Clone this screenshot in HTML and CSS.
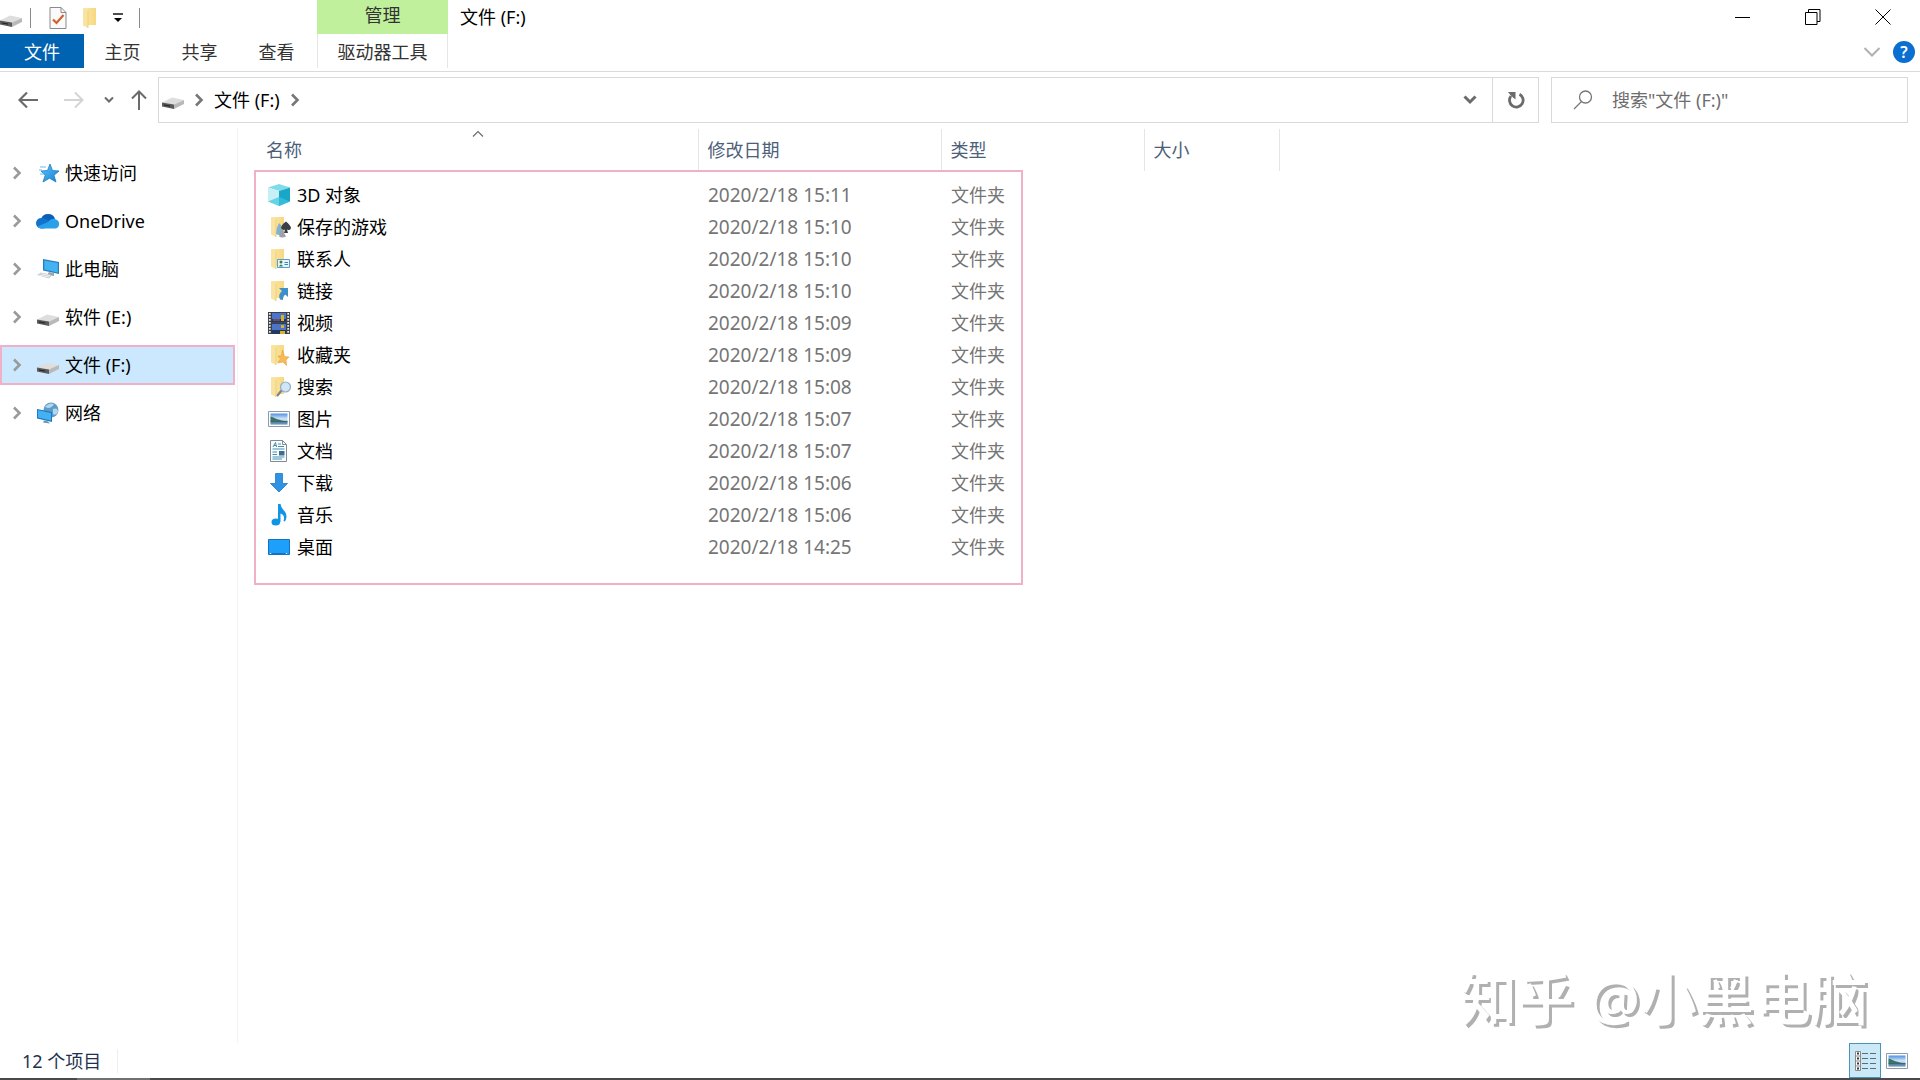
FILE: index.html
```html
<!DOCTYPE html>
<html lang="zh-CN">
<head>
  <meta charset="UTF-8">
  <title>文件 (F:)</title>
  <link rel="stylesheet" href="styles.css">
</head>
<body>
  <svg class="defs" aria-hidden="true">
    <defs>
      <linearGradient id="gFolder" x1="0" x2="1" y1="0" y2="0">
        <stop offset="0" stop-color="#fbe7a6"/>
        <stop offset="1" stop-color="#f6d880"/>
      </linearGradient>
      <linearGradient id="gSky" x1="0" x2="0" y1="0" y2="1">
        <stop offset="0" stop-color="#4f8fe0"/>
        <stop offset="0.5" stop-color="#d3e8f8"/>
        <stop offset="1" stop-color="#4a7fae"/>
      </linearGradient>
      <linearGradient id="gBlue" x1="0" x2="1" y1="0" y2="1">
        <stop offset="0" stop-color="#5fc4f8"/>
        <stop offset="1" stop-color="#1580d4"/>
      </linearGradient>
      <symbol id="drive" viewBox="0 0 22 22">
        <path d="M0 13.500L10 8.500L22 11L12 15.500Z" fill="#dedede"/>
        <path d="M0 13.500L12 15.500V20L0 17.500Z" fill="#5a5a5a"/>
        <path d="M12 15.500L22 11V15L12 20Z" fill="#b9b9b9"/>
        <path d="M2 15.500L8 16.600V17.600L2 16.500Z" fill="#222"/>
      </symbol>
      <symbol id="folder" viewBox="0 0 22 22">
        <path d="M4 1H16V18H4Z" fill="url(#gFolder)"/>
        <path d="M3 1L8 3.500V21L3 18.500Z" fill="#f9e3a0"/>
        <path d="M8 3.500V21" stroke="#edd07a" fill="none"/>
      </symbol>
      <symbol id="picture" viewBox="0 0 22 22">
        <path d="M.5 3.500H21.500V18.500H.5Z" fill="#fff" stroke="#8d9aa8"/>
        <path d="M2.500 5.500H19.500V16.500H2.500Z" fill="url(#gSky)"/>
        <path d="M2.500 8.500C7 10 11 12.500 19.500 13.500H2.500Z" fill="#3a7562"/>
        <path d="M2.500 13H19.500V14.500H2.500Z" fill="#3b6573"/>
      </symbol>
      <symbol id="chevron" viewBox="0 0 10 14">
        <path d="M2 1.500L7.500 7L2 12.500" fill="none" stroke="currentColor" stroke-width="2.600"/>
      </symbol>
    </defs>
  </svg>

  <div class="window">
    <header class="titlebar">
      <div class="quick">
        <svg class="icon"><use href="#drive"/></svg>
        <span class="sep"></span>
        <button class="quick-btn" aria-label="属性">
          <svg class="icon" viewBox="0 0 22 22"><path d="M3 .5H14L19 5.500V21.500H3Z" fill="#fafafa" stroke="#8a8a8a"/><path d="M14 .5V5.500H19" fill="none" stroke="#8a8a8a"/><path d="M6 12.500L9.500 16L16.500 8" fill="none" stroke="#d2602b" stroke-width="2.200"/></svg>
        </button>
        <button class="quick-btn" aria-label="新建文件夹"><svg class="icon"><use href="#folder"/></svg></button>
        <button class="quick-btn small" aria-label="自定义快速访问工具栏">
          <svg width="10" height="10" viewBox="0 0 10 10"><path d="M0 1H10" stroke="#000" stroke-width="1.400"/><path d="M1 5H9L5 9Z"/></svg>
        </button>
        <span class="sep"></span>
      </div>
      <div class="context-tab">管理</div>
      <h1 class="title">文件 (F:)</h1>
      <div class="window-btns">
        <button aria-label="最小化"><svg width="16" height="16" viewBox="0 0 16 16"><path d="M0 8.500H15"/></svg></button>
        <button aria-label="还原"><svg width="16" height="16" viewBox="0 0 16 16"><path d="M.5 3.500H12V15.500H.5ZM3.500 3.500V.5H15V12.500H12"/></svg></button>
        <button aria-label="关闭"><svg width="16" height="16" viewBox="0 0 16 16"><path d="M.5 .5L15.500 15.500M15.500 .5L.5 15.500"/></svg></button>
      </div>
    </header>

    <nav class="ribbon">
      <button class="tab file">文件</button>
      <button class="tab">主页</button>
      <button class="tab">共享</button>
      <button class="tab">查看</button>
      <button class="tab tools">驱动器工具</button>
      <div class="ribbon-right">
        <button aria-label="展开功能区"><svg width="18" height="12" viewBox="0 0 18 12"><path d="M1.500 2L9 9.500L16.500 2" fill="none" stroke="#b0b0b0" stroke-width="2"/></svg></button>
        <button class="help" aria-label="帮助">?</button>
      </div>
    </nav>

    <div class="address-row">
      <div class="arrows">
        <button aria-label="后退"><svg width="20" height="18" viewBox="0 0 20 18"><path d="M9 1.500L1.500 9L9 16.500M1.500 9H20" fill="none" stroke="#6b6b6b" stroke-width="2.200"/></svg></button>
        <button aria-label="前进"><svg width="20" height="18" viewBox="0 0 20 18"><path d="M11 1.500L18.500 9L11 16.500M18.500 9H0" fill="none" stroke="#d4d4d4" stroke-width="2"/></svg></button>
        <button aria-label="最近浏览的位置"><svg width="10" height="8" viewBox="0 0 10 8"><path d="M1 1.500L5 5.500L9 1.500" fill="none" stroke="#6b6b6b" stroke-width="2"/></svg></button>
        <button aria-label="上移"><svg width="16" height="20" viewBox="0 0 16 20"><path d="M1 8.500L8 1.500L15 8.500M8 1.500V20" fill="none" stroke="#6b6b6b" stroke-width="2"/></svg></button>
      </div>
      <div class="address">
        <svg class="icon"><use href="#drive"/></svg>
        <svg class="chev dark"><use href="#chevron"/></svg>
        <a href="#" class="crumb">文件 (F:)</a>
        <svg class="chev dark"><use href="#chevron"/></svg>
        <button class="drop" aria-label="历史记录"><svg width="14" height="10" viewBox="0 0 14 10"><path d="M1.500 1.500L7 7L12.500 1.500" fill="none" stroke="#6b6b6b" stroke-width="3"/></svg></button>
        <button class="refresh" aria-label="刷新"><svg width="18" height="18" viewBox="0 0 18 18"><path d="M12.500 3.200A6.800 6.800 0 1 1 4 5" fill="none" stroke="#6b6b6b" stroke-width="2.800"/><path d="M1 1H8.500V8.500L6 6.500L3 3.500Z" fill="#6b6b6b"/></svg></button>
      </div>
      <label class="search">
        <svg width="20" height="20" viewBox="0 0 20 20"><circle cx="12.500" cy="7" r="6" fill="none" stroke="#777" stroke-width="1.300"/><path d="M8.500 11.500L1 19" stroke="#777" stroke-width="1.300"/></svg>
        <input type="text" aria-label="搜索" placeholder='搜索"文件 (F:)"'>
      </label>
    </div>

    <main class="content">
      <nav class="sidebar">
        <a href="#" class="nav-item">
          <svg class="chev"><use href="#chevron"/></svg>
          <svg class="icon" viewBox="0 0 22 22"><path d="M13 2L15.500 8.500L22 9L17 13.300L19 20L12.500 16.200L6 20L8.200 13.300L4 9L10.500 8.500Z" fill="url(#gBlue)" stroke="#1d7cc4" stroke-width=".8"/><path d="M3 5H9M2 8H5M3 12H7" stroke="#6bbdf0" stroke-width="1.200"/></svg>
          快速访问
        </a>
        <a href="#" class="nav-item">
          <svg class="chev"><use href="#chevron"/></svg>
          <svg class="icon wide" viewBox="0 0 24 22"><path d="M5 9A7.600 7.600 0 0 1 19 8.500L13 14L2 15Z" fill="#0a5fb8"/><path d="M5 18.500A5 5 0 0 1 5.500 8C9 7.500 11 9.500 15 12L8 18.500Z" fill="#1272cc"/><path d="M12 12C14.500 8.500 18 8 20 9.500A4.800 4.800 0 0 1 20 18.500H5Q3 18.500 1.500 16.500Z" fill="#28a0ea"/></svg>
          OneDrive
        </a>
        <a href="#" class="nav-item">
          <svg class="chev"><use href="#chevron"/></svg>
          <svg class="icon" viewBox="0 0 22 22"><path d="M6 1L22 4V16L6 12.500Z" fill="#2b7dbb"/><path d="M7.300 2.500L20.800 5V14.500L7.300 11.500Z" fill="#43b3f3"/><path d="M12 14L17 15L17 18L10 17Z" fill="#9aa5ad"/><path d="M0 17L4 14.500L15 17L12 20.500Z" fill="#c5cbd0"/><path d="M2 17L12 19M4 15.700L13 17.800" stroke="#fff" stroke-width=".7"/></svg>
          此电脑
        </a>
        <a href="#" class="nav-item">
          <svg class="chev"><use href="#chevron"/></svg>
          <svg class="icon"><use href="#drive"/></svg>
          软件 (E:)
        </a>
        <a href="#" class="nav-item selected">
          <svg class="chev"><use href="#chevron"/></svg>
          <svg class="icon"><use href="#drive"/></svg>
          文件 (F:)
        </a>
        <a href="#" class="nav-item">
          <svg class="chev"><use href="#chevron"/></svg>
          <svg class="icon" viewBox="0 0 22 22"><circle cx="14" cy="8" r="7.500" fill="#5b9cc9"/><path d="M8 5Q12 0 17 2Q15 6 11 6ZM16 7Q21 5 21 10Q19 14 16 12Z" fill="#b4d6ea"/><path d="M0 7L15 10V20L0 16.500Z" fill="#1f78bd"/><path d="M1 8.200L14 11V18.500L1 15.500Z" fill="#44b2f2"/><path d="M7 18.500L11 19.500L13 21.500L6 20.500Z" fill="#6a91ab"/></svg>
          网络
        </a>
      </nav>

      <section class="files">
        <table>
          <thead>
            <tr>
              <th class="name">名称<svg class="sort" width="12" height="8" viewBox="0 0 12 8"><path d="M1 6.500L6 1.500L11 6.500" fill="none" stroke="#6b6b6b" stroke-width="1.200"/></svg></th>
              <th class="date">修改日期</th>
              <th class="type">类型</th>
              <th class="size">大小</th>
            </tr>
          </thead>
          <tbody>
            <tr>
              <td><a href="#"><svg class="icon" viewBox="0 0 22 22"><path d="M0 3.500L11 0L22 3.500L11 7Z" fill="#7fdbea"/><path d="M0 3.500L11 7V22L0 17.500Z" fill="#c6f0f6"/><path d="M11 7L22 3.500V17.500L11 22Z" fill="#1aa7c6"/><path d="M0 17.500L11 13L22 17.500L11 22Z" fill="#3cc4de" opacity=".7"/></svg>3D 对象</a></td>
              <td>2020/2/18 15:11</td><td>文件夹</td><td></td>
            </tr>
            <tr>
              <td><a href="#"><svg class="icon" viewBox="0 0 22 22"><use href="#folder"/><path d="M11 7Q8 12 8 18L13 20V9Z" fill="#7fb2d4"/><path d="M18 5.500Q13 9 13 12Q14 15 17 13.500L16 17H20L19 13.500Q22.500 15 23 12Q22.500 9 18 5.500Z" fill="#3b3f45"/><path d="M13 13Q16 13 15.500 16L18 20.500Q14 22.500 11 20.500L12.500 17Z" fill="#9ea1a5"/></svg>保存的游戏</a></td>
              <td>2020/2/18 15:10</td><td>文件夹</td><td></td>
            </tr>
            <tr>
              <td><a href="#"><svg class="icon" viewBox="0 0 22 22"><use href="#folder"/><path d="M9.500 11.500H21.500V19.500H9.500Z" fill="#e6f4fc" stroke="#5a9bc8"/><circle cx="13" cy="14" r="1.500" fill="#3c7d5a"/><path d="M11 18.500Q13 14.500 15 18.500Z" fill="#3c7d5a"/><path d="M16.500 14.500H20M16.500 16.500H20" stroke="#3d86bd"/></svg>联系人</a></td>
              <td>2020/2/18 15:10</td><td>文件夹</td><td></td>
            </tr>
            <tr>
              <td><a href="#"><svg class="icon" viewBox="0 0 22 22"><use href="#folder"/><path d="M11 8H20V17L17.500 14.800Q14.500 16 15 20L12 19.500Q9.500 15 14 11Z" fill="#3f8fcb"/></svg>链接</a></td>
              <td>2020/2/18 15:10</td><td>文件夹</td><td></td>
            </tr>
            <tr>
              <td><a href="#"><svg class="icon" viewBox="0 0 22 22"><path d="M0 0H22V22H0Z" fill="#3a3f48"/><path d="M4 1H18V10.500H4ZM4 12H18V22H4Z" fill="#4d74c9"/><path d="M4 7H18V10.500H4ZM4 18H18V22H4Z" fill="#27385e"/><path d="M13 3H16V9H13ZM13 13H16V16H13ZM12 19H17V22H12Z" fill="#d9b320"/><path d="M5 8H12" stroke="#b4606f"/><path d="M1.800 1V22M20.200 1V22" stroke="#e8e8e8" stroke-width="1.800" stroke-dasharray="1.800 1.200"/></svg>视频</a></td>
              <td>2020/2/18 15:09</td><td>文件夹</td><td></td>
            </tr>
            <tr>
              <td><a href="#"><svg class="icon" viewBox="0 0 22 22"><use href="#folder"/><path d="M14.500 6L16.500 12.500L21 13L18 16L18.500 21.500L15 18L9.500 19L12.500 15L10 12L13.500 12Z" fill="#f7bb55" stroke="#e3a03a" stroke-width=".6"/></svg>收藏夹</a></td>
              <td>2020/2/18 15:09</td><td>文件夹</td><td></td>
            </tr>
            <tr>
              <td><a href="#"><svg class="icon" viewBox="0 0 22 22"><use href="#folder"/><path d="M14 14L9 20" stroke="#7d8388" stroke-width="2.200"/><circle cx="17.500" cy="11" r="5" fill="#cfe6f6" stroke="#8fb0c8" stroke-width="1.200"/></svg>搜索</a></td>
              <td>2020/2/18 15:08</td><td>文件夹</td><td></td>
            </tr>
            <tr>
              <td><a href="#"><svg class="icon"><use href="#picture"/></svg>图片</a></td>
              <td>2020/2/18 15:07</td><td>文件夹</td><td></td>
            </tr>
            <tr>
              <td><a href="#"><svg class="icon" viewBox="0 0 22 22"><path d="M2.500 .5H14.500L18.500 4.500V21.500H2.500Z" fill="#fdfdfd" stroke="#7f8c96"/><path d="M14.500 .5V4.500H18.500" fill="none" stroke="#7f8c96"/><path d="M5 7L7.500 2.500L8.500 7M6 5.500H8.500M10 4H13M10 6.500H16M4.500 9H16.500M4.500 12H9M4.500 14.500H9M4.500 17H16.500M4.500 19H14" fill="none" stroke="#3c93b8"/><path d="M11 11H16.500V15.500H11Z" fill="#3f6d92"/></svg>文档</a></td>
              <td>2020/2/18 15:07</td><td>文件夹</td><td></td>
            </tr>
            <tr>
              <td><a href="#"><svg class="icon" viewBox="0 0 22 22"><path d="M7.500 1.500H14.500V11.500H19.500L11 20L2.500 11.500H7.500Z" fill="#2f92e4" stroke="#2278c4" stroke-width=".8"/></svg>下载</a></td>
              <td>2020/2/18 15:06</td><td>文件夹</td><td></td>
            </tr>
            <tr>
              <td><a href="#"><svg class="icon" viewBox="0 0 22 22"><ellipse cx="7.800" cy="18" rx="4.300" ry="3.600" fill="#0f94e8"/><path d="M10 0H12.500Q13 4 16 6.500Q20.500 11 17 17.500L15.500 17Q17.500 11.500 12.500 9.500V18H10Z" fill="#0f94e8"/></svg>音乐</a></td>
              <td>2020/2/18 15:06</td><td>文件夹</td><td></td>
            </tr>
            <tr>
              <td><a href="#"><svg class="icon" viewBox="0 0 22 22"><path d="M.5 3.500H21.500V18.500H.5Z" fill="#1ca0fb" stroke="#1573b8"/><path d="M2 17.500H20" stroke="#d8efff" stroke-dasharray="1 1"/><path d="M4 17.500H17" stroke="#1573b8"/></svg>桌面</a></td>
              <td>2020/2/18 14:25</td><td>文件夹</td><td></td>
            </tr>
          </tbody>
        </table>
        <div class="highlight"></div>
      </section>
    </main>

    <footer class="statusbar">
      <span class="count">12 个项目</span>
      <div class="views">
        <button class="view active" aria-label="详细信息">
          <svg class="icon" viewBox="0 0 22 22"><path d="M1.500 1.500H6.500V20.500H1.500ZM1.500 6H6.500M1.500 11H6.500M1.500 16H6.500" fill="#fff" stroke="#8a8a8a"/><path d="M3 3.500H5M3 8.500H5M3 13.500H5M3 18.500H5" stroke="#333" stroke-width="2"/><path d="M8 3.500H14M16 3.500H22M8 8.500H14M16 8.500H22M8 13.500H14M16 13.500H22M8 18.500H14M16 18.500H22" stroke="#55707c"/></svg>
        </button>
        <button class="view" aria-label="大缩略图"><svg class="icon"><use href="#picture"/></svg></button>
      </div>
    </footer>
    <div class="edge"><span></span></div>
    <div class="watermark">知乎 @小黑电脑</div>
  </div>
</body>
</html>
```
FILE: styles.css
```css
* {
  box-sizing: border-box;
}

body {
  margin: 0;
  font-family: "Noto Sans", "Noto Sans CJK SC", sans-serif;
  font-size: 18px;
  line-height: 24px;
  color: #000;
  background: #fff;
}

button {
  display: flex;
  align-items: center;
  justify-content: center;
  padding: 0;
  border: none;
  background: none;
  font: inherit;
  color: inherit;
}

a {
  color: inherit;
  text-decoration: none;
}

.defs {
  position: absolute;
  width: 0;
  height: 0;
}

.window {
  position: relative;
  display: flex;
  flex-direction: column;
  min-height: 100vh;
}

.icon {
  width: 22px;
  height: 22px;
  flex: none;
  overflow: visible;
}

.icon.wide {
  width: 24px;
  margin-left: -1px;
  margin-right: -1px;
}

.chev {
  width: 10px;
  height: 14px;
  flex: none;
  color: #9a9a9a;
}

.chev.dark {
  color: #777;
}

/* title bar */
.titlebar {
  display: flex;
  height: 34px;
}

.quick {
  display: flex;
  align-items: center;
  width: 317px;
  padding-top: 2px;
}

.sep {
  width: 1px;
  height: 20px;
  margin-left: 8px;
  background: #8a8a8a;
}

.quick-btn {
  margin-left: 16px;
}

.quick-btn + .quick-btn {
  margin-left: 11px;
}

.quick-btn.small + .sep {
  margin-left: 16px;
}

.context-tab {
  width: 131px;
  padding-top: 3px;
  text-align: center;
  background: #c0f09c;
  color: #333;
}

.title {
  margin: 0;
  padding: 5px 0 0 12px;
  font-size: 18px;
  font-weight: 400;
}

.window-btns {
  display: flex;
  margin-left: auto;
  padding-right: 2px;
}

.window-btns button {
  width: 70px;
}

.window-btns path {
  fill: none;
  stroke: #000;
}

/* ribbon tabs */
.ribbon {
  display: flex;
  height: 38px;
  border-bottom: 1px solid #dadbdc;
}

.tab {
  width: 77px;
  height: 34px;
  padding-top: 2px;
  color: #333;
}

.tab.file {
  width: 84px;
  background: #0063b1;
  color: #fff;
}

.tab.tools {
  width: 131px;
  margin-left: 2px;
  border: 1px solid #e6e6e6;
  border-width: 0 1px;
}

.ribbon-right {
  display: flex;
  align-items: center;
  gap: 12px;
  margin-left: auto;
  padding: 0 5px 2px 0;
}

.help {
  width: 22px;
  height: 22px;
  border-radius: 50%;
  background: #0a6fd0;
  color: #fff;
  font-size: 16px;
  font-weight: 600;
}

/* address bar */
.address-row {
  display: flex;
  height: 56px;
  padding: 5px 12px 5px 0;
}

.arrows {
  display: flex;
  align-items: center;
  width: 158px;
  padding-left: 18px;
  gap: 26px;
}

.arrows button:nth-child(3) {
  margin-left: -6px;
}

.arrows button:nth-child(4) {
  margin-left: -9px;
}

.address {
  display: flex;
  align-items: center;
  flex: 1;
  padding-left: 3px;
  border: 1px solid #d9d9d9;
}

.address .chev {
  margin: 0 10px;
}

.drop {
  width: 44px;
  height: 100%;
  margin-left: auto;
}

.refresh {
  width: 46px;
  height: 100%;
  border-left: 1px solid #d9d9d9;
}

.search {
  display: flex;
  align-items: center;
  gap: 19px;
  width: 357px;
  margin-left: 12px;
  padding-left: 21px;
  border: 1px solid #d9d9d9;
}

.search input {
  flex: 1;
  min-width: 0;
  padding: 0;
  border: none;
  outline: none;
  font: inherit;
}

.search input::placeholder {
  color: #6d6d6d;
}

/* navigation pane and file list */
.content {
  display: flex;
  flex: 1;
}

.sidebar {
  display: flex;
  flex-direction: column;
  gap: 8px;
  width: 238px;
  padding: 25px 2px 0 0;
  border-right: 1px solid #f3f3f3;
}

.nav-item {
  display: flex;
  align-items: center;
  height: 40px;
  padding-left: 10px;
  border: 2px solid transparent;
  gap: 6px;
}

.nav-item .chev {
  margin-right: 9px;
}

.nav-item.selected {
  background: #cce8ff;
  border-color: #f0b0c6;
}

.files {
  position: relative;
  align-self: flex-start;
  padding-top: 1px;
}

table {
  border-collapse: collapse;
  table-layout: fixed;
  width: 1042px;
}

th {
  height: 42px;
  padding: 0 0 0 9px;
  border-right: 1px solid #e5e5e5;
  color: #4c607a;
  font-weight: 400;
  text-align: left;
}

.name {
  position: relative;
  width: 460px;
  padding-left: 28px;
}

.date {
  width: 243px;
}

.type {
  width: 203px;
}

.sort {
  position: absolute;
  top: 1px;
  left: 234px;
}

/* space between the header row and the first file */
tbody::before {
  content: "";
  display: block;
  height: 8px;
}

td {
  height: 32px;
  padding: 0 0 0 10px;
  color: #757575;
}

td:first-child {
  padding-left: 30px;
  color: #000;
}

td:nth-child(2) {
  font-size: 19px;
}

td a {
  display: flex;
  align-items: center;
  gap: 7px;
}

.highlight {
  position: absolute;
  top: 42px;
  left: 16px;
  bottom: -22px;
  width: 769px;
  border: 2px solid #f0b0c6;
  pointer-events: none;
}

/* status bar */
.statusbar {
  display: flex;
  align-items: center;
  height: 35px;
  padding: 0 7px 0 22px;
}

.count {
  padding-right: 16px;
  border-right: 1px solid #eee;
  color: #1e3250;
}

.views {
  display: flex;
  margin-left: auto;
}

.view {
  width: 32px;
  height: 35px;
}

.view.active {
  background: #cbe8f6;
  border: 1px solid #4a94b8;
}

.edge {
  height: 2px;
  padding-left: 77px;
  background: #4a4a4a;
}

.edge span {
  display: block;
  width: 73px;
  height: 2px;
  background: #707070;
}

.watermark {
  position: absolute;
  right: 52px;
  bottom: 48px;
  font-size: 57px;
  font-weight: 500;
  line-height: 68px;
  color: #fff;
  text-shadow: 3px 3px 0 #b0b0b0;
}
```
